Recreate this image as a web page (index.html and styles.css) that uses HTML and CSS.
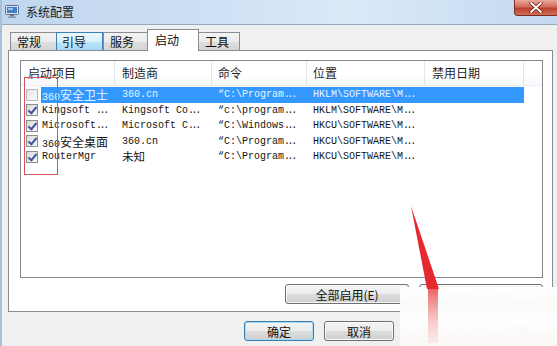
FILE: index.html
```html
<!DOCTYPE html>
<html>
<head>
<meta charset="utf-8">
<title>系统配置</title>
<link rel="stylesheet" href="styles.css">
</head>
<body>
<div class="window">
  <div class="titlebar">
    <svg class="appicon" width="14" height="13" viewBox="0 0 14 13">
      <rect x="0.5" y="0.5" width="13" height="9" rx="1" fill="#dfe6ee" stroke="#5d6f84"/>
      <rect x="2" y="2" width="10" height="6" fill="#3f7fd0"/>
      <rect x="3" y="3" width="5" height="2" fill="#9cc7f2"/>
      <rect x="5" y="10" width="4" height="1.5" fill="#6b7785"/>
      <rect x="3" y="11.5" width="8" height="1.5" fill="#8a96a3"/>
    </svg>
    <span class="title">系统配置</span>
    <div class="close">
      <svg width="14" height="11" viewBox="0 0 14 11">
        <path d="M2 1 L12 10 M12 1 L2 10" stroke="#6e1f18" stroke-width="3.4" stroke-linecap="round"/>
        <path d="M2 1 L12 10 M12 1 L2 10" stroke="#ffffff" stroke-width="1.8" stroke-linecap="round"/>
      </svg>
    </div>
  </div>
  <div class="client">
    <div class="tabs">
      <div class="tab">常规</div>
      <div class="tab hot">引导</div>
      <div class="tab">服务</div>
      <div class="tab active">启动</div>
      <div class="tab">工具</div>
    </div>
    <div class="panel">
      <div class="list">
        <div class="row header">
          <div class="h">启动项目</div>
          <div class="h">制造商</div>
          <div class="h">命令</div>
          <div class="h">位置</div>
          <div class="h">禁用日期</div>
          <div class="h last"></div>
        </div>
        <div class="row sel">
          <div class="c first"><span class="cb"></span><span class="lbl">360<span class="cjk big">安全卫士</span></span></div>
          <div class="c">360.cn</div>
          <div class="c">“C:\Program<span class="el">...</span></div>
          <div class="c">HKLM\SOFTWARE\M<span class="el">...</span></div>
          <div class="c"></div>
        </div>
        <div class="row">
          <div class="c first"><span class="cb on"></span><span class="lbl">Kingsoft <span class="el">...</span></span></div>
          <div class="c">Kingsoft Co<span class="el">...</span></div>
          <div class="c">“c:\program<span class="el">...</span></div>
          <div class="c">HKLM\SOFTWARE\M<span class="el">...</span></div>
          <div class="c"></div>
        </div>
        <div class="row">
          <div class="c first"><span class="cb on"></span><span class="lbl">Microsoft<span class="el">...</span></span></div>
          <div class="c">Microsoft C<span class="el">...</span></div>
          <div class="c">“C:\Windows<span class="el">...</span></div>
          <div class="c">HKCU\SOFTWARE\M<span class="el">...</span></div>
          <div class="c"></div>
        </div>
        <div class="row">
          <div class="c first"><span class="cb on"></span><span class="lbl">360<span class="cjk big">安全桌面</span></span></div>
          <div class="c">360.cn</div>
          <div class="c">“C:\Program<span class="el">...</span></div>
          <div class="c">HKCU\SOFTWARE\M<span class="el">...</span></div>
          <div class="c"></div>
        </div>
        <div class="row">
          <div class="c first"><span class="cb on"></span><span class="lbl">RouterMgr</span></div>
          <div class="c"><span class="cjk">未知</span></div>
          <div class="c">“C:\Program<span class="el">...</span></div>
          <div class="c">HKCU\SOFTWARE\M<span class="el">...</span></div>
          <div class="c"></div>
        </div>
      </div>
      <div class="panel-buttons">
        <button class="btn wide">全部启用(E)</button>
        <button class="btn wide">全部禁用(D)</button>
      </div>
    </div>
    <div class="dialog-buttons">
      <button class="btn default">确定</button>
      <button class="btn">取消</button>
      <button class="btn">应用(A)</button>
      <button class="btn">帮助</button>
    </div>
  </div>

  <div class="mark-box"></div>
  <div class="watermark"></div>
  <svg class="arrow" width="557" height="346" viewBox="0 0 557 346">
    <defs>
      <linearGradient id="streak" x1="0" y1="0" x2="0" y2="1">
        <stop offset="0" stop-color="#e8474c" stop-opacity="0.85"/>
        <stop offset="0.5" stop-color="#ec6d70" stop-opacity="0.45"/>
        <stop offset="1" stop-color="#f08f90" stop-opacity="0.12"/>
      </linearGradient>
    </defs>
    <polygon points="411,206 439,289 427,289" fill="#e52a2f"/>
    <rect x="428" y="289" width="10" height="54" fill="url(#streak)"/>
  </svg>
</div>
</body>
</html>
```

FILE: styles.css
```css
* { box-sizing: border-box; margin: 0; padding: 0; }

html, body {
  width: 557px;
  height: 346px;
  overflow: hidden;
}

body {
  font-family: "Noto Sans CJK SC", "Liberation Sans", sans-serif;
  font-size: 12px;
  color: #1b1b1b;
  background: #f0f0f0;
}

.window {
  position: relative;
  width: 557px;
  height: 346px;
  background: #f0f0f0;
  border-left: 2px solid #a9c0d8;
  display: flex;
  flex-direction: column;
}

/* ---------- title bar ---------- */
.titlebar {
  height: 25px;
  flex: none;
  display: flex;
  align-items: center;
  padding-left: 3px;
  background: linear-gradient(to right, #bfd6ee 0%, #cfe1f4 40%, #dbe9f8 62%, #c3d9f0 100%);
  border-bottom: 1px solid #9aa9b8;
  position: relative;
}

.appicon { flex: none; margin-top: -2px; }

.title {
  margin-left: 7px;
  font-size: 12px;
  line-height: 14px;
  color: #1a1a1a;
  margin-top: -1px;
}

.close {
  position: absolute;
  top: 0;
  right: -2px;
  width: 45px;
  height: 16px;
  border: 1px solid #7d2b24;
  border-top: none;
  border-radius: 0 0 4px 4px;
  background: linear-gradient(#e9a999 0%, #d26a5a 45%, #bf3f30 55%, #d0705c 100%);
  display: flex;
  align-items: center;
  justify-content: center;
  padding-right: 2px;
}

/* ---------- client ---------- */
.client {
  flex: 1;
  display: flex;
  flex-direction: column;
}

.tabs {
  height: 25px;
  display: flex;
  align-items: flex-end;
  padding-left: 8px;
  position: relative;
  z-index: 2;
}

.tab {
  height: 18px;
  width: 46px;
  padding-left: 6px;
  font-size: 12px;
  line-height: 17px;
  border: 1px solid #898c95;
  border-bottom: none;
  border-right: none;
  background: linear-gradient(#f3f3f3, #ebebeb 50%, #dedede 51%, #d6d6d6);
  color: #111;
}

.tab:nth-child(5) { border-right: 1px solid #898c95; width: 42px; }

.tab.hot {
  background: linear-gradient(#eaf6fd, #d9f0fc 50%, #bee6fd 51%, #a7d9f5);
  border-color: #3c7fb1;
  border-right: 1px solid #3c7fb1;
  width: 47px;
  padding-left: 5px;
}

.tab.active {
  height: 22px;
  width: 52px;
  margin: 0 -1px -1px -2px;
  padding-left: 7px;
  line-height: 19px;
  background: #ffffff;
  border: 1px solid #898c95;
  border-bottom: none;
  position: relative;
  z-index: 3;
}

.panel {
  margin-left: 6px;
  width: 545px;
  height: 262px;
  background: #ffffff;
  border: 1px solid #898c95;
  display: flex;
  flex-direction: column;
  padding: 9px 9px 0 11px;
}

/* ---------- list view ---------- */
.list {
  width: 523px;
  height: 218px;
  border: 1px solid #828790;
  background: #ffffff;
  font-family: "Liberation Mono", "Noto Sans CJK SC", monospace;
  font-size: 10px;
  color: #151515;
}

.row {
  display: grid;
  grid-template-columns: 94px 97px 95px 118px 99px 1fr;
  height: 15.5px;
  align-items: center;
}

.row.header {
  height: 25px;
  margin-bottom: 1px;
  font-family: "Noto Sans CJK SC", sans-serif;
  font-size: 12px;
  color: #1e1e1e;
  background: linear-gradient(#ffffff, #ffffff 55%, #f7f8fa);
  border-bottom: 1px solid #eceef1;
}

.h {
  height: 100%;
  line-height: 23px;
  padding-left: 7px;
  border-right: 1px solid #e3e5e8;
}
.h:nth-child(3), .h:nth-child(4) { padding-left: 6px; }
.h.last { border-right: none; }

.c {
  height: 100%;
  line-height: 15.5px;
  padding-left: 7px;
  white-space: nowrap;
  overflow: hidden;
}
.c:nth-child(3), .c:nth-child(4) { padding-left: 6px; }

.c.first {
  display: flex;
  align-items: center;
  padding-left: 5px;
}

.lbl {
  flex: 1;
  height: 100%;
  margin-left: 3px;
  padding-left: 1px;
  line-height: 15.5px;
}

.cjk {
  font-family: "Noto Sans CJK SC", sans-serif;
  font-size: 11.5px;
}
.cjk.big { font-size: 12px; }

.el { letter-spacing: -2.4px; }

.row.sel .lbl,
.row.sel .c:not(.first) {
  background: #3399ff;
  color: #e6f4ff;
}

.cb {
  flex: none;
  width: 12px;
  height: 12px;
  border: 1px solid #8e8f8f;
  background: linear-gradient(135deg, #d9d9d9, #f7f7f7);
  position: relative;
}
.row.sel .cb { border-color: #b8b8b8; background: linear-gradient(135deg, #e4e4e4, #fbfbfb); }

.cb.on::after {
  content: "";
  position: absolute;
  left: 3px;
  top: 0px;
  width: 3px;
  height: 7px;
  border: solid #3f55a0;
  border-width: 0 2px 2px 0;
  transform: rotate(40deg);
}

/* ---------- buttons ---------- */
.panel-buttons {
  margin-top: 6px;
  display: flex;
  justify-content: flex-end;
  gap: 10px;
}

.btn {
  font-family: "Noto Sans CJK SC", sans-serif;
  font-size: 12px;
  color: #111;
  height: 20px;
  width: 70px;
  line-height: 17px;
  border: 1px solid #707070;
  border-radius: 3px;
  background: linear-gradient(#f4f4f4, #ececec 48%, #dddddd 52%, #cfcfcf);
  box-shadow: inset 0 0 0 1px rgba(255,255,255,0.8);
}

.btn.wide { width: 124px; }

.btn.default {
  border-color: #3c7fb1;
  box-shadow: inset 0 0 0 1px #a6daf6;
}

.dialog-buttons {
  margin-top: 9px;
  margin-left: 242px;
  display: flex;
  gap: 10px;
}

/* ---------- overlays ---------- */
.mark-box {
  position: absolute;
  left: 22px;
  top: 77px;
  width: 34px;
  height: 98px;
  border: 1px solid #d8505c;
}

.arrow {
  position: absolute;
  left: -2px;
  top: 0;
  pointer-events: none;
}

.watermark {
  position: absolute;
  left: 398px;
  top: 287px;
  width: 159px;
  height: 59px;
  background:
    linear-gradient(rgba(255,255,255,0.99), rgba(251,251,250,0.985) 30%, rgba(255,255,255,0.99) 55%, rgba(251,248,246,0.985) 100%);
}
```
